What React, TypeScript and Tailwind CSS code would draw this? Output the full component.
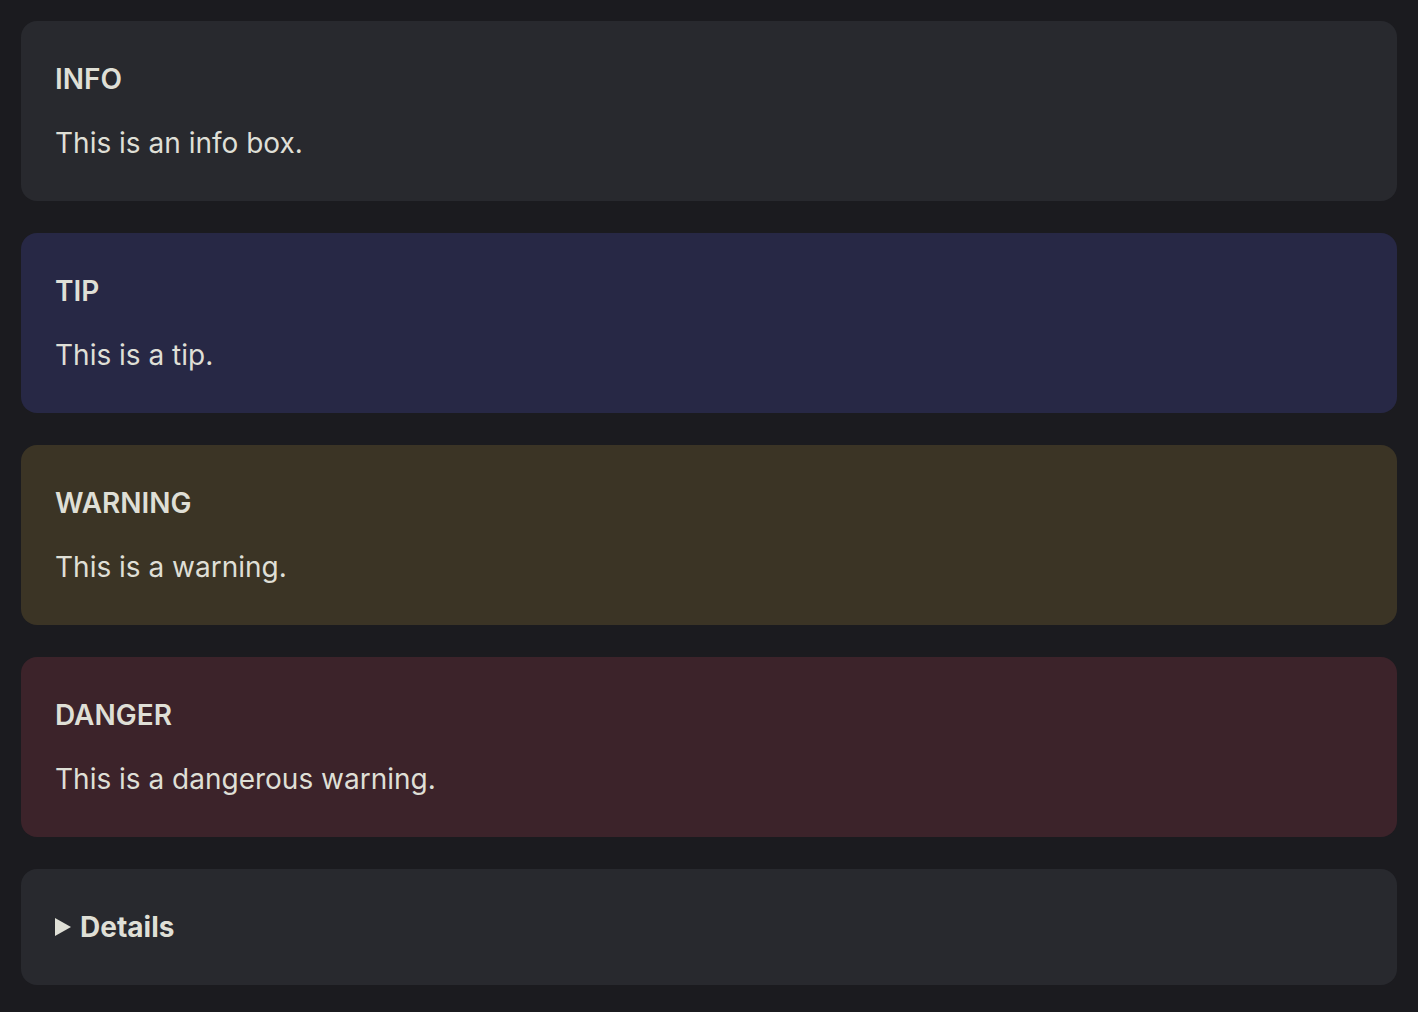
import React from "react";

type Block = {
  title: string;
  text: string;
  bg: string;
};

const blocks: Block[] = [
  { title: "INFO", text: "This is an info box.", bg: "bg-[#28292e]" },
  { title: "TIP", text: "This is a tip.", bg: "bg-[#272845]" },
  { title: "WARNING", text: "This is a warning.", bg: "bg-[#3b3425]" },
  { title: "DANGER", text: "This is a dangerous warning.", bg: "bg-[#3c232a]" },
];

const CustomBlock: React.FC<{ block: Block }> = ({ block }) => (
  <div className={`${block.bg} rounded-2xl px-[34px] pt-[34px] pb-[33px]`}>
    <p className="text-[28px] leading-[48px] font-semibold">{block.title}</p>
    <p className="mt-[16px] mb-[1px] text-[28px] leading-[48px]">{block.text}</p>
  </div>
);

export default function App() {
  return (
    <div
      className="min-h-screen bg-[#1b1b1f] px-[21px] pt-[21px] pb-[28px] text-[#dfdfd6]"
      style={{ fontFamily: "Inter, 'Noto Sans', sans-serif" }}
    >
      <div className="flex flex-col gap-[32px]">
        {blocks.map((b) => (
          <CustomBlock key={b.title} block={b} />
        ))}

        <details className="bg-[#28292e] rounded-2xl px-[34px] pt-[34px] pb-[34px]">
          <summary className="list-none flex items-center gap-[9px] text-[28px] leading-[48px] font-bold cursor-pointer [&::-webkit-details-marker]:hidden">
            <svg width="16" height="18" viewBox="0 0 16 18" className="shrink-0">
              <path d="M0 0 L16 9 L0 18 Z" fill="#dfdfd6" />
            </svg>
            Details
          </summary>
        </details>
      </div>
    </div>
  );
}
